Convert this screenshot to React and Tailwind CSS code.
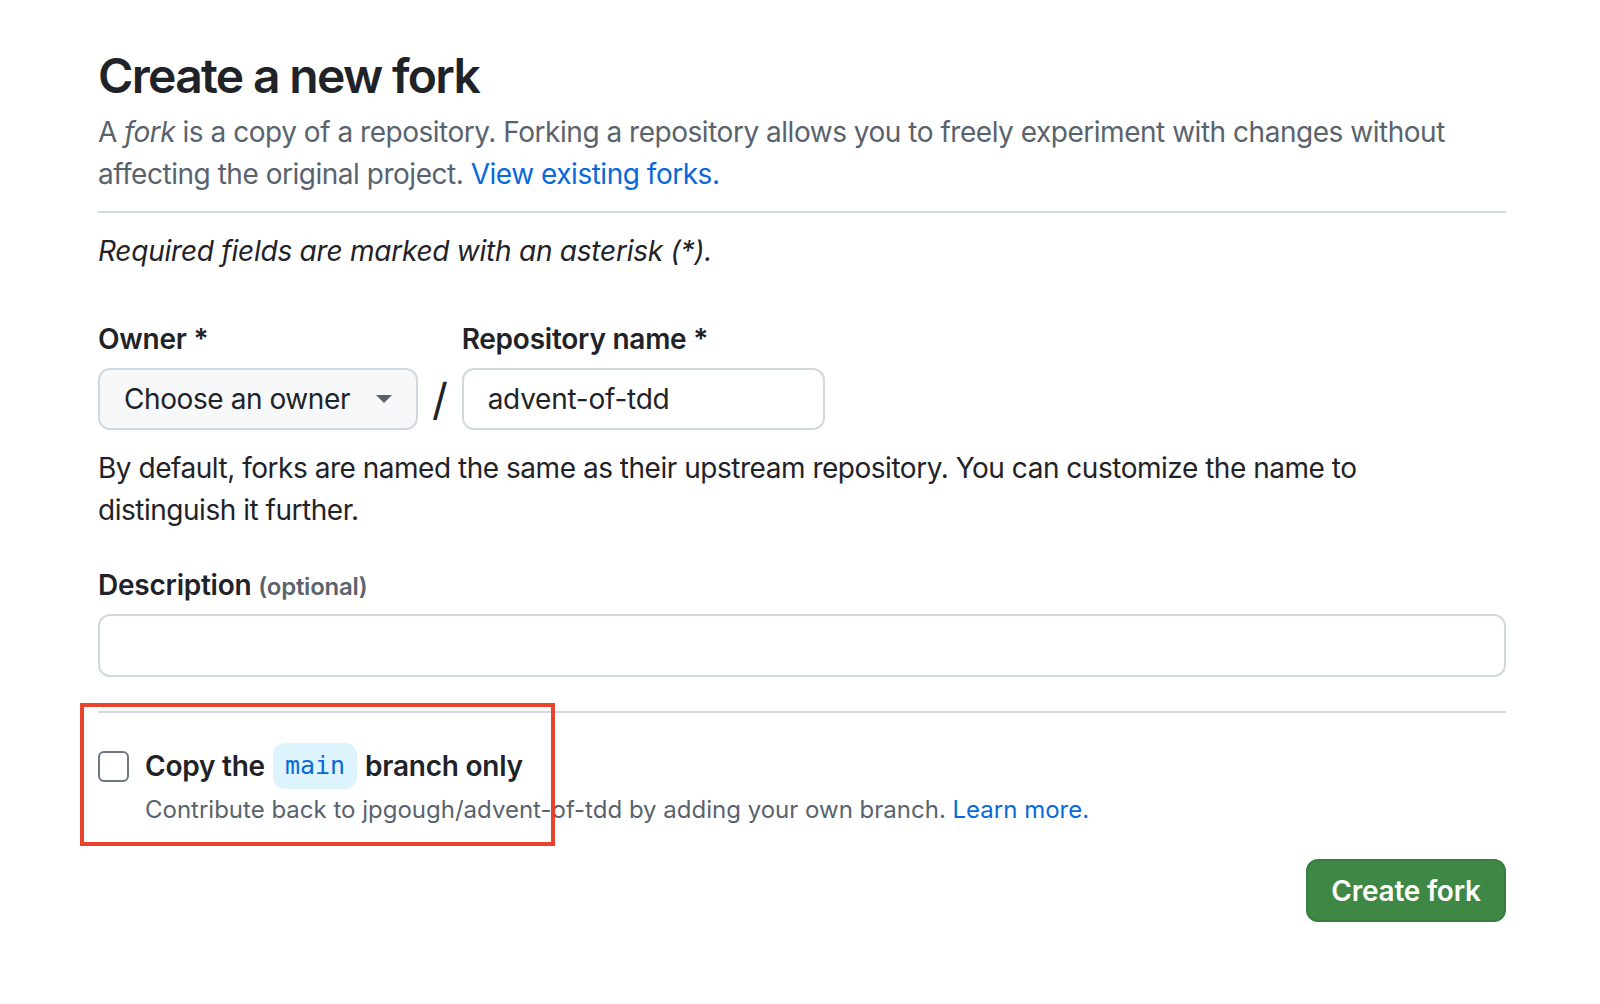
import React from "react";

const font = { fontFamily: "Inter, 'Noto Sans', 'Liberation Sans', sans-serif" };

export default function App() {
  return (
    <div className="relative min-h-[1004px] bg-white text-[#1f2328] tracking-[-0.015em]" style={font}>
      <div className="w-[1408px] ml-[98px] pt-[46px]">
        {/* header */}
        <div className="border-b-2 border-[#d1d9e0] pb-4">
          <h1 className="text-[48px] leading-[60px] font-semibold tracking-[-0.035em]">Create a new fork</h1>
          <p className="mt-[5px] text-[28px] leading-[42px] tracking-[-0.017em] text-[#59636e]">
            A <em>fork</em> is a copy of a repository. Forking a repository allows you to freely experiment with changes without affecting the original project.{" "}
            <a className="text-[#0969da]">View existing forks.</a>
          </p>
        </div>

        <p className="mt-[17px] text-[28px] leading-[42px] italic">Required fields are marked with an asterisk (*).</p>

        {/* owner / repo */}
        <div className="mt-[46px] flex items-end">
          <div className="flex flex-col gap-2">
            <label className="text-[28px] leading-[42px] font-semibold">Owner *</label>
            <button className="flex h-[62px] w-[320px] items-center justify-between rounded-[12px] border-2 border-[#d1d9e0] bg-[#f6f8fa] pl-[24px] pr-[24px] text-[28px] tracking-[-0.015em]">
              <span>Choose an owner</span>
              <svg width="16" height="10" viewBox="0 0 16 10">
                <path d="M0 1h16L8 9z" fill="#59636e" />
              </svg>
            </button>
          </div>
          <span className="mx-[14px] mb-[6px] text-[44px] leading-[50px]">/</span>
          <div className="flex flex-col gap-2">
            <label className="text-[28px] leading-[42px] font-semibold">Repository name *</label>
            <div className="flex h-[62px] w-[363px] items-center rounded-[12px] border-2 border-[#d1d9e0] bg-white pl-[24px] text-[28px]">
              advent-of-tdd
            </div>
          </div>
        </div>

        <p className="mt-[17px] text-[28px] leading-[42px] tracking-[-0.017em] pr-[100px]">
          By default, forks are named the same as their upstream repository. You can customize the name to distinguish it further.
        </p>

        {/* description */}
        <div className="mt-[33px] flex flex-col gap-[6px]">
          <label className="text-[28px] leading-[42px] font-semibold">
            Description <span className="text-[24px] text-[#59636e]">(optional)</span>
          </label>
          <div className="h-[63px] w-full rounded-[12px] border-2 border-[#d1d9e0] bg-white" />
        </div>

        {/* branch */}
        <div className="mt-[34px] border-t-2 border-[#d1d9e0] pt-[30px]">
          <div className="flex items-center gap-4">
            <span className="h-[31px] w-[31px] rounded-[6px] border-2 border-[#6e7781] bg-white" />
            <span className="flex items-center text-[28px] leading-[42px] font-semibold">
              Copy the
              <code className="mx-[8px] rounded-[12px] bg-[#ddf4ff] px-[12px] py-[2px] text-[25px] font-normal tracking-normal text-[#0969da]" style={{ fontFamily: "'DejaVu Sans Mono', 'Liberation Mono', monospace" }}>
                main
              </code>
              branch only
            </span>
          </div>
          <p className="ml-[47px] mt-[3px] text-[24px] leading-[36px] tracking-normal text-[#59636e]">
            Contribute back to jpgough/advent-of-tdd by adding your own branch.{" "}
            <a className="text-[#0969da]">Learn more.</a>
          </p>
        </div>

        <div className="mt-[31px] flex justify-end">
          <button className="h-[63px] w-[200px] rounded-[12px] border-2 border-[#3a7d40] bg-[#3e8745] text-[28px] font-semibold text-white">
            Create fork
          </button>
        </div>
      </div>

      {/* annotation overlay */}
      <div className="pointer-events-none absolute left-[80px] top-[703px] h-[143px] w-[475px] border-[4px] border-[#e8432d]" />
    </div>
  );
}
